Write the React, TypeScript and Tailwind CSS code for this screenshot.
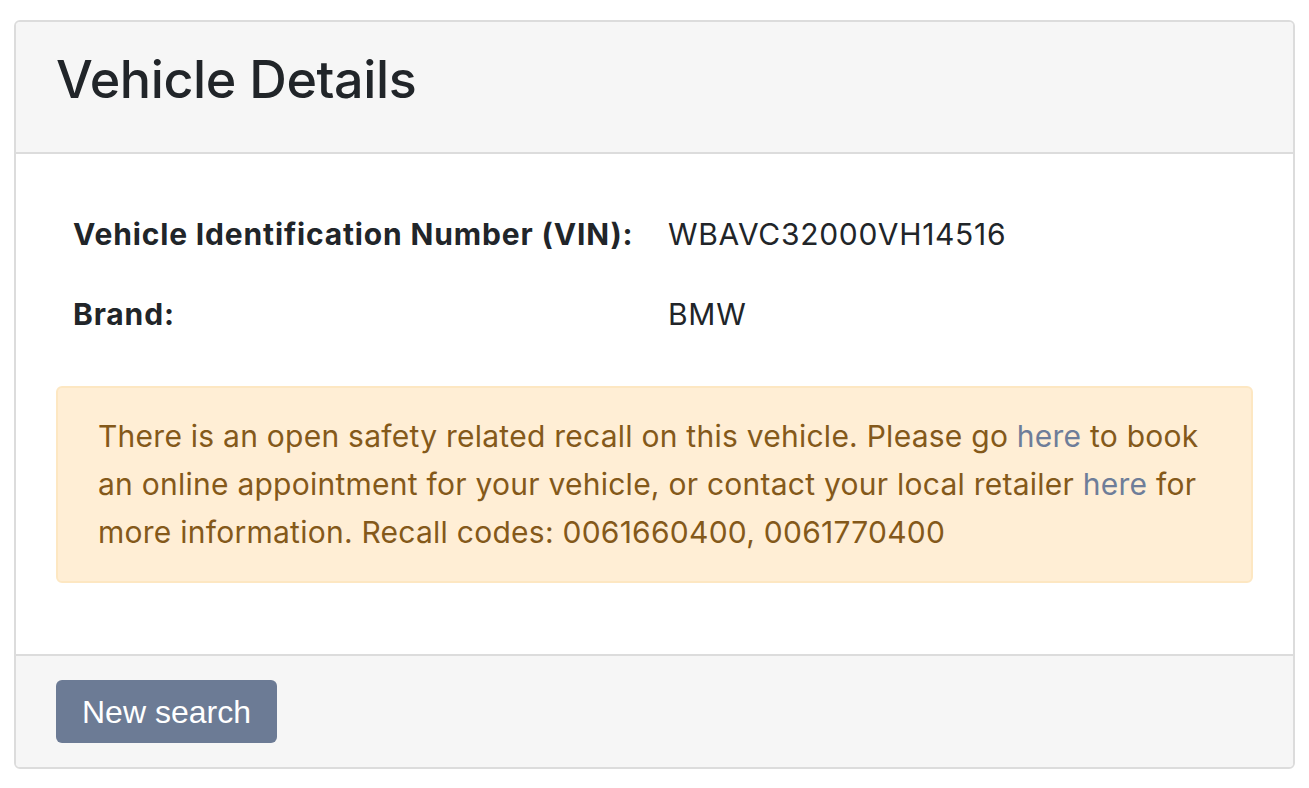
export default function App() {
  return (
    <div className="min-h-screen bg-white pt-[20px] pl-[14px] pr-[14px] [font-family:Inter,'Noto_Sans',sans-serif]">
      <div className="w-[1281px] overflow-hidden rounded-[6px] border-2 border-[#dcdcdc]">
        {/* Header */}
        <div className="h-[132px] border-b-2 border-[#dcdcdc] bg-[#f6f6f6] px-[40px] pt-[32px]">
          <h1 className="text-[52px] font-medium leading-none tracking-[-0.4px] text-[#212529]">
            Vehicle Details
          </h1>
        </div>

        {/* Body */}
        <div className="bg-white px-[40px] pt-[61px] pb-[71px]">
          <dl className="flex flex-col gap-[42px] px-[17px] text-[30px] leading-[38px] text-[#212529]">
            <div className="flex">
              <dt className="w-[595px] font-bold tracking-[0.85px]">
                Vehicle Identification Number (VIN):
              </dt>
              <dd className="tracking-[0.7px]">WBAVC32000VH14516</dd>
            </div>
            <div className="flex">
              <dt className="w-[595px] font-bold tracking-[0.85px]">Brand:</dt>
              <dd className="tracking-[0.7px]">BMW</dd>
            </div>
          </dl>

          <div className="mt-[53px] rounded-[6px] border-2 border-[#fde7c2] bg-[#ffeed5] px-[40px] pt-[24px] pb-[25px] text-[30px] leading-[48px] tracking-[0.25px] text-[#84591a]">
            There is an open safety related recall on this vehicle. Please go{" "}
            <a className="text-[#6e7d99]">here</a> to book an online appointment
            for your vehicle, or contact your local retailer{" "}
            <a className="text-[#6e7d99]">here</a> for more information. Recall
            codes: 0061660400, 0061770400
          </div>
        </div>

        {/* Footer */}
        <div className="border-t-2 border-[#dcdcdc] bg-[#f6f6f6] px-[40px] pt-[24px] pb-[24px]">
          <button className="h-[63px] rounded-[6px] bg-[#6c7b95] px-[26px] text-[32px] text-white [font-family:'Liberation_Sans',Arial,sans-serif]">
            New search
          </button>
        </div>
      </div>
    </div>
  );
}
